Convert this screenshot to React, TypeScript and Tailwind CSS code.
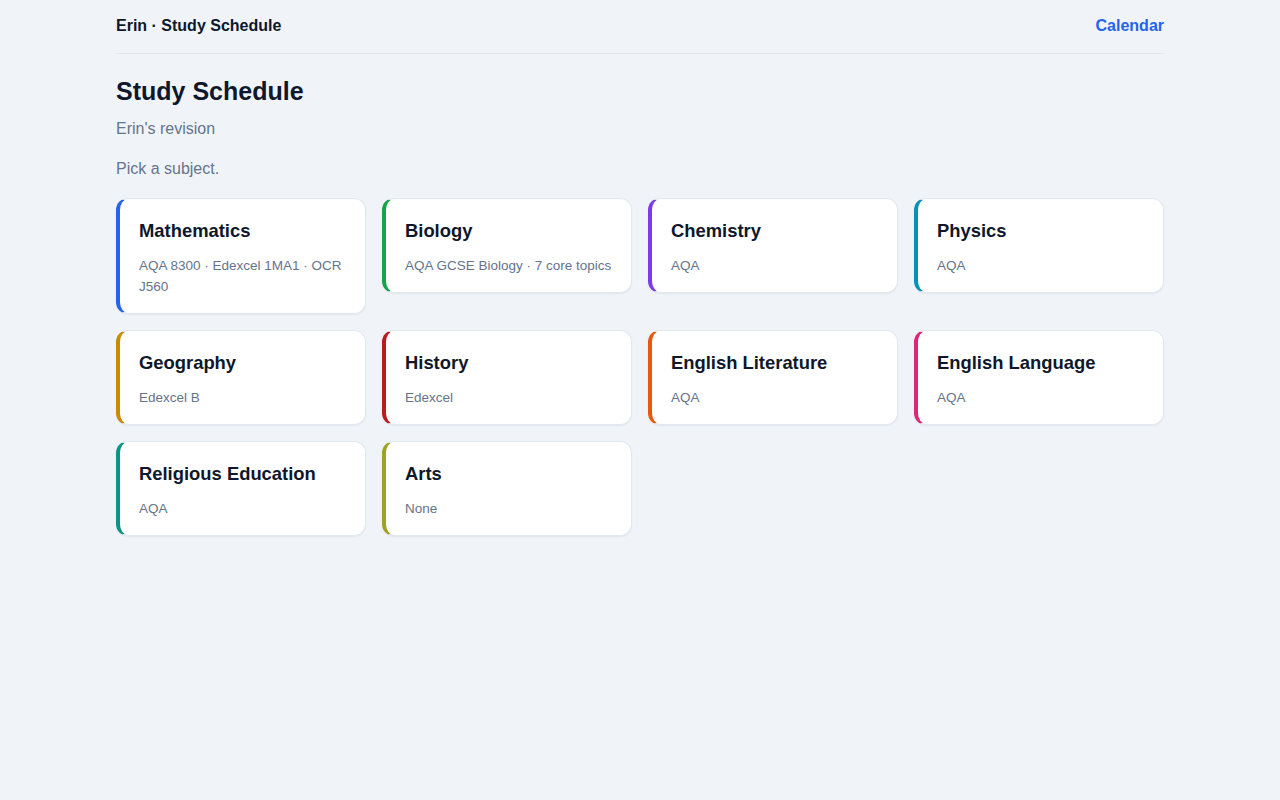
import React from "react";

const subjects = [
  { name: "Mathematics", sub: "AQA 8300 · Edexcel 1MA1 · OCR J560", color: "border-l-[#2563eb]" },
  { name: "Biology", sub: "AQA GCSE Biology · 7 core topics", color: "border-l-[#16a34a]" },
  { name: "Chemistry", sub: "AQA", color: "border-l-[#7c3aed]" },
  { name: "Physics", sub: "AQA", color: "border-l-[#0891b2]" },
  { name: "Geography", sub: "Edexcel B", color: "border-l-[#ca8a04]" },
  { name: "History", sub: "Edexcel", color: "border-l-[#b91c1c]" },
  { name: "English Literature", sub: "AQA", color: "border-l-[#ea580c]" },
  { name: "English Language", sub: "AQA", color: "border-l-[#db2777]" },
  { name: "Religious Education", sub: "AQA", color: "border-l-[#0d9488]" },
  { name: "Arts", sub: "None", color: "border-l-[#9ea325]" },
];

export default function App() {
  return (
    <div
      className="min-h-screen bg-[#f0f4f9] text-[#0f172a]"
      style={{ fontFamily: '"Liberation Sans", Arial, sans-serif' }}
    >
      <div className="mx-auto w-[1048px]">
        <header className="flex items-center justify-between border-b border-[#dfe6f0] pt-[14px] pb-[15px]">
          <div className="text-[16px] leading-6 font-bold text-[#0f172a]">Erin · Study Schedule</div>
          <a className="text-[16px] leading-6 font-bold text-[#2563eb]" href="#">
            Calendar
          </a>
        </header>
        <main>
          <h1 className="mt-[21px] text-[25px] leading-8 font-bold text-[#0f172a]">Study Schedule</h1>
          <p className="mt-[10px] text-[16px] leading-6 text-[#64748b]">Erin's revision</p>
          <p className="mt-[16px] text-[16px] leading-6 text-[#64748b]">Pick a subject.</p>
          <div className="mt-[17px] grid grid-cols-4 items-start gap-4">
            {subjects.map((s) => (
              <div
                key={s.name}
                className={`rounded-xl border border-[#e2e8f0] border-l-4 ${s.color} bg-white pl-[19px] pr-[18px] pt-[19px] pb-[16px] shadow-[0_1px_2px_rgba(15,23,42,0.06)]`}
              >
                <div className="text-[18.4px] leading-[25px] font-bold text-[#0f172a]">{s.name}</div>
                <div className="mt-[12px] text-[13.5px] leading-[21px] text-[#64748b]">{s.sub}</div>
              </div>
            ))}
          </div>
        </main>
      </div>
    </div>
  );
}
